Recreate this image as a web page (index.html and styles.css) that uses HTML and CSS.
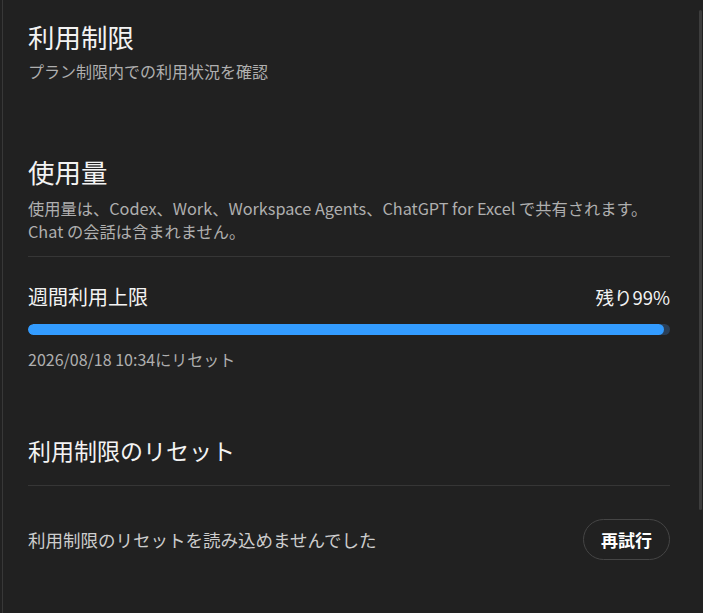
FILE: index.html
```html
<!DOCTYPE html>
<html lang="ja">
<head>
<meta charset="utf-8">
<link rel="stylesheet" href="styles.css">
</head>
<body>
<div class="panel">
  <header class="page-head">
    <h1 class="page-title">利用制限</h1>
    <p class="page-sub">プラン制限内での利用状況を確認</p>
  </header>

  <section class="usage">
    <h2 class="sec-title">使用量</h2>
    <p class="sec-desc">使用量は、Codex、Work、Workspace Agents、ChatGPT for Excel で共有されます。<br>Chat の会話は含まれません。</p>
    <div class="divider"></div>
    <div class="meter">
      <div class="meter-head">
        <span class="meter-label">週間利用上限</span>
        <span class="meter-value">残り99%</span>
      </div>
      <div class="track"><div class="fill" style="width:99%"></div></div>
      <div class="meter-note">2026/08/18 10:34にリセット</div>
    </div>
  </section>

  <section class="resets">
    <h2 class="sec-title sec-title-sm">利用制限のリセット</h2>
    <div class="divider divider-tight"></div>
    <div class="error-row">
      <span class="error-text">利用制限のリセットを読み込めませんでした</span>
      <button class="retry">再試行</button>
    </div>
  </section>
</div>
<div class="scroll-thumb"></div>
</body>
</html>
```
FILE: styles.css
```css
html, body {
  margin: 0;
  padding: 0;
  height: 100%;
  background: #212121;
  overflow: hidden;
}
body {
  font-family: "Noto Sans CJK JP", "Noto Sans", sans-serif;
  color: #ececec;
  position: relative;
}
.panel {
  margin-left: 2px;
  border-left: 1px solid #383838;
  height: 613px;
  box-sizing: border-box;
  padding: 19px 33px 0 25px;
}
.page-title {
  margin: 0;
  font-size: 26.5px;
  line-height: 36px;
  font-weight: 400;
  color: #f3f3f3;
}
.page-sub {
  margin: 5px 0 0;
  font-size: 16px;
  line-height: 22px;
  color: #afafaf;
}
.usage {
  margin-top: 72px;
}
.sec-title {
  margin: 0;
  font-size: 26.5px;
  line-height: 36px;
  font-weight: 400;
  color: #f3f3f3;
}
.sec-title-sm {
  font-size: 23px;
}
.sec-desc {
  margin: 7px 0 0;
  font-size: 16.25px;
  line-height: 23px;
  color: #afafaf;
}
.divider {
  height: 1px;
  background: #363636;
  margin-top: 13px;
}
.meter {
  margin-top: 27px;
}
.meter-head {
  display: flex;
  justify-content: space-between;
  align-items: baseline;
  line-height: 26px;
  color: #f3f3f3;
}
.meter-label {
  font-size: 20px;
}
.meter-value {
  font-size: 18.5px;
}
.track {
  margin-top: 14px;
  height: 11px;
  border-radius: 6px;
  background: #2a3f57;
  overflow: hidden;
}
.fill {
  height: 100%;
  background: #339cff;
  border-radius: 6px;
}
.meter-note {
  margin-top: 13px;
  font-size: 16px;
  line-height: 22px;
  color: #afafaf;
}
.resets {
  margin-top: 62px;
}
.divider-tight {
  margin-top: 17px;
}
.error-row {
  display: flex;
  justify-content: space-between;
  align-items: center;
  margin-top: 33px;
}
.error-text {
  font-size: 17.5px;
  line-height: 24px;
  color: #cdcdcd;
}
.retry {
  font-family: inherit;
  font-size: 17px;
  font-weight: 700;
  color: #ffffff;
  background: transparent;
  border: 1px solid #454545;
  border-radius: 999px;
  height: 41px;
  padding: 0 17px;
}
.scroll-thumb {
  position: absolute;
  right: 1px;
  top: 10px;
  width: 3px;
  height: 500px;
  border-radius: 2px;
  background: #3d3d3d;
}
```
